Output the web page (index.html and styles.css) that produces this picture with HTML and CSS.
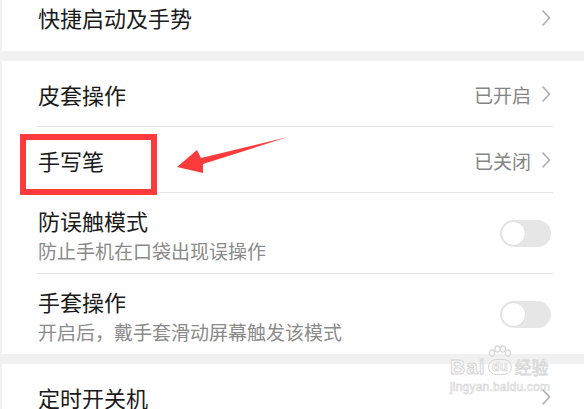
FILE: index.html
```html
<!DOCTYPE html>
<html lang="zh-CN">
<head>
    <meta charset="UTF-8">
    <meta name="viewport" content="width=device-width, initial-scale=1.0">
    <title>设置 - 辅助功能</title>
    <link rel="stylesheet" href="styles.css">
</head>
<body>
    <div class="page">
        <div class="group">
            <div class="row first">
                <span class="title">快捷启动及手势</span>
                <div class="right">
                    <svg class="chevron" viewBox="0 0 10 18"><polyline points="1.5,1.5 8.5,9 1.5,16.5"/></svg>
                </div>
            </div>
        </div>

        <div class="group">
            <div class="row">
                <span class="title">皮套操作</span>
                <div class="right">
                    <span class="value">已开启</span>
                    <svg class="chevron" viewBox="0 0 10 18"><polyline points="1.5,1.5 8.5,9 1.5,16.5"/></svg>
                </div>
            </div>
            <div class="row marked">
                <span class="title">手写笔</span>
                <div class="right">
                    <span class="value">已关闭</span>
                    <svg class="chevron" viewBox="0 0 10 18"><polyline points="1.5,1.5 8.5,9 1.5,16.5"/></svg>
                </div>
                <!-- 标注：红框和箭头 -->
                <div class="redbox"></div>
                <svg class="arrow" viewBox="0 0 120 44">
                    <polygon points="5,34 25,17 29,25 116,4 31,31 31,40"/>
                </svg>
            </div>
            <div class="row tall">
                <div class="text">
                    <div class="title">防误触模式</div>
                    <div class="sub">防止手机在口袋出现误操作</div>
                </div>
                <div class="switch"><span class="knob"></span></div>
            </div>
            <div class="row tall">
                <div class="text">
                    <div class="title">手套操作</div>
                    <div class="sub">开启后，戴手套滑动屏幕触发该模式</div>
                </div>
                <div class="switch"><span class="knob"></span></div>
            </div>
        </div>

        <div class="group">
            <div class="row">
                <span class="title">定时开关机</span>
                <div class="right">
                    <svg class="chevron" viewBox="0 0 10 18"><polyline points="1.5,1.5 8.5,9 1.5,16.5"/></svg>
                </div>
            </div>
        </div>
    </div>

    <!-- 百度经验水印 -->
    <div class="watermark">
        <div class="wm-logo">
            <span class="wm-bai">Bai</span>
            <span class="wm-du">
                <svg class="paw" viewBox="0 0 24 12">
                    <ellipse cx="4" cy="8" rx="2.6" ry="3.2"/>
                    <ellipse cx="9.5" cy="4" rx="2.6" ry="3.2"/>
                    <ellipse cx="15" cy="4" rx="2.6" ry="3.2"/>
                    <ellipse cx="20" cy="8" rx="2.6" ry="3.2"/>
                </svg>
                du
            </span>
            <span class="wm-cn">经验</span>
        </div>
        <div class="wm-url">jingyan.baidu.com</div>
    </div>
</body>
</html>
```

FILE: styles.css
```css
body {
    margin: 0;
    background-color: #f1f1f1;
    font-family: "Noto Sans CJK SC", "Noto Sans", sans-serif;
    color: #1a1a1a;
    overflow: hidden;
}

.page {
    margin-top: -15px;
    padding-left: 2px;
}

.group {
    background-color: #fff;
    margin-bottom: 10px;
}

.row {
    position: relative;
    display: flex;
    align-items: center;
    justify-content: space-between;
    height: 65px;
    margin: 0 31px 0 35px;
    padding: 0 2px 0 1px;
    border-bottom: 1px solid #e4e4e4;
}

.row:last-child {
    border-bottom: none;
}

.first {
    height: 66px;
}

.first .title {
    padding-bottom: 3px;
}

.tall {
    height: 80px;
}

.title {
    font-size: 22px;
    line-height: 30px;
}

.text {
    padding-top: 6px;
}

.sub {
    font-size: 19px;
    line-height: 32px;
    color: #8a8a8a;
}

.right {
    display: flex;
    align-items: center;
}

.value {
    font-size: 19px;
    color: #858585;
    margin-right: 10px;
    padding-top: 2px;
}

.chevron {
    width: 10px;
    height: 18px;
    fill: none;
    stroke: #b3b3b3;
    stroke-width: 1.8;
}

.switch {
    position: relative;
    width: 51px;
    height: 27px;
    border-radius: 14px;
    background-color: #e6e6e6;
}

.knob {
    position: absolute;
    left: 1px;
    top: 1px;
    width: 25px;
    height: 25px;
    border-radius: 50%;
    background-color: #fff;
    box-sizing: border-box;
    border: 1px solid #dedede;
}

.redbox {
    position: absolute;
    left: -17px;
    top: 7px;
    width: 137px;
    height: 61px;
    box-sizing: border-box;
    border: 6px solid #fd3b3d;
}

.arrow {
    position: absolute;
    left: 135px;
    top: 6px;
    width: 120px;
    height: 44px;
    fill: #fd3b3d;
}

.watermark {
    position: absolute;
    left: 450px;
    top: 344px;
    width: 102px;
    color: #fafafa;
    font-family: "Liberation Sans", sans-serif;
}

.wm-logo {
    display: flex;
    align-items: flex-end;
    height: 34px;
}

.wm-bai {
    font-size: 21px;
    font-weight: bold;
    line-height: 22px;
    -webkit-text-stroke: 1px #d6d6d6;
    letter-spacing: 1px;
}

.wm-du {
    position: relative;
    font-size: 13px;
    font-weight: bold;
    line-height: 14px;
    padding: 0 3px;
    margin: 0 3px 3px 2px;
    border: 1.5px solid #d6d6d6;
    border-radius: 8px;
    -webkit-text-stroke: 0.7px #d6d6d6;
}

.paw {
    position: absolute;
    left: -1px;
    top: -15px;
    width: 24px;
    height: 12px;
    fill: #fafafa;
    stroke: #d6d6d6;
    stroke-width: 1.2;
}

.wm-cn {
    font-family: "Noto Sans CJK SC", sans-serif;
    font-size: 17px;
    line-height: 22px;
    -webkit-text-stroke: 0.8px #d6d6d6;
}

.wm-url {
    margin-top: 3px;
    font-size: 12px;
    line-height: 12px;
    letter-spacing: 0.2px;
    -webkit-text-stroke: 0.6px #d6d6d6;
}
```
